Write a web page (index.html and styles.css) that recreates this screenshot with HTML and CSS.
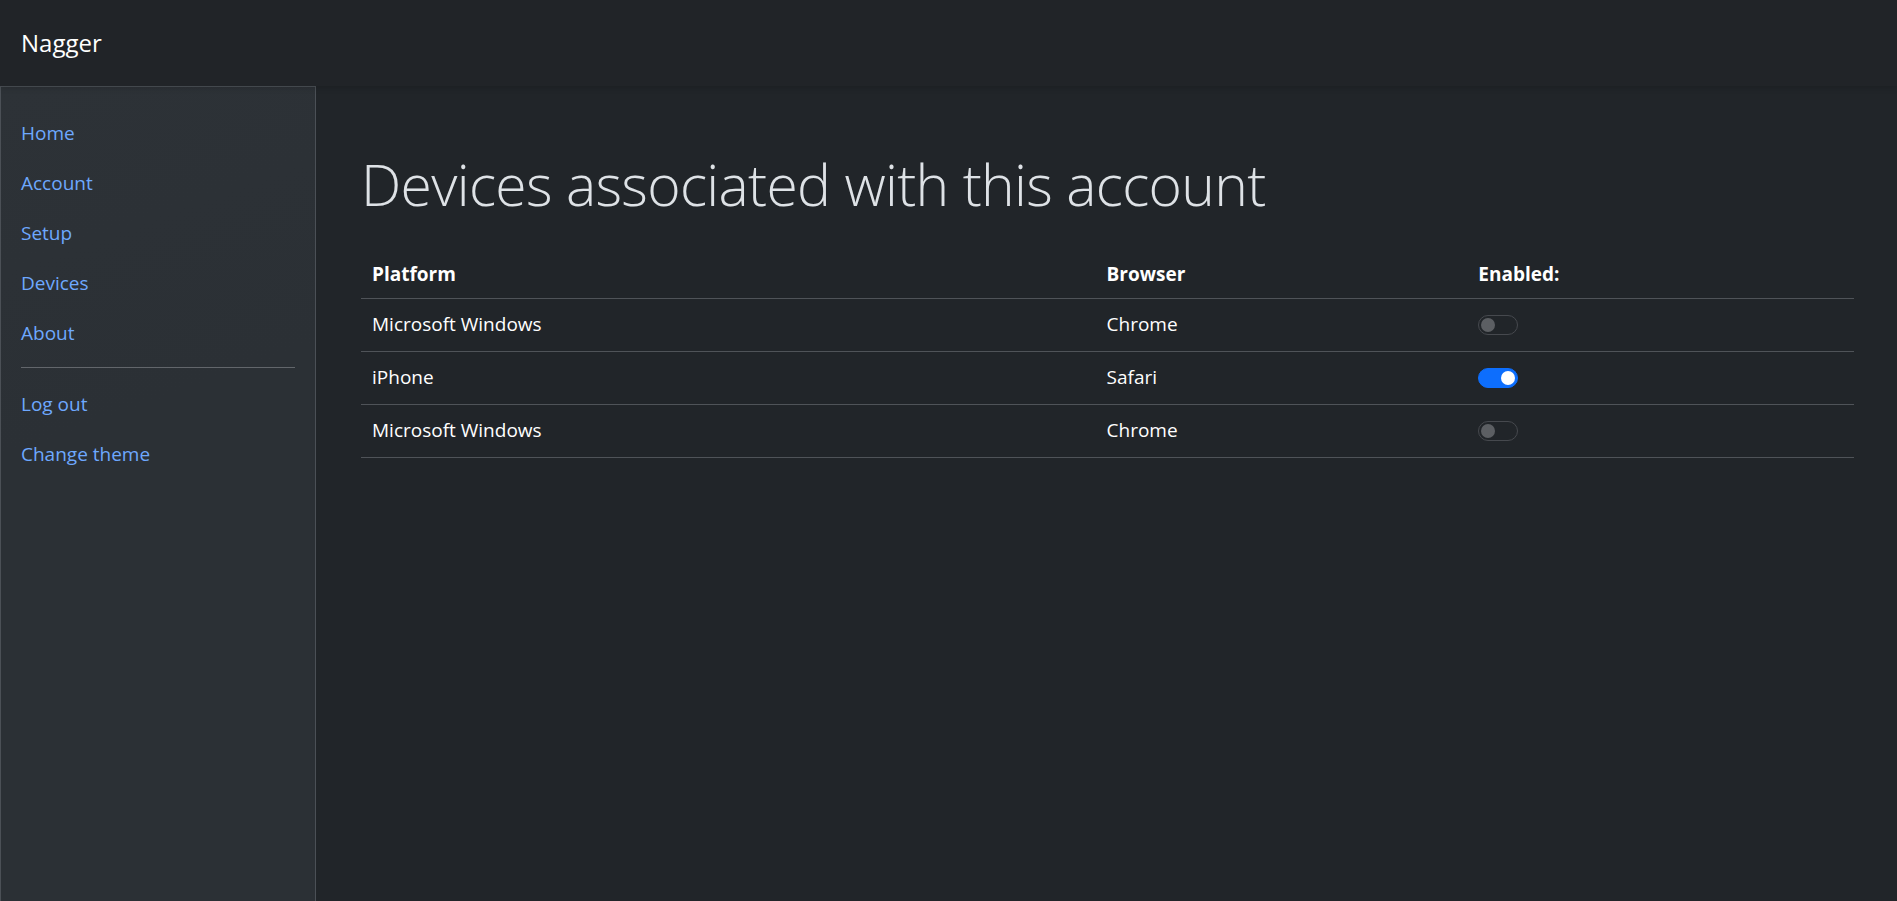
FILE: index.html
```html
<!DOCTYPE html>
<html lang="en">
<head>
<meta charset="utf-8">
<title>Nagger - Devices</title>
<link rel="stylesheet" href="styles.css">
</head>
<body>
<header class="topbar">
  <a class="brand" href="#">Nagger</a>
</header>
<div class="layout">
  <nav class="sidebar">
    <ul class="nav-list">
      <li><a href="#">Home</a></li>
      <li><a href="#">Account</a></li>
      <li><a href="#">Setup</a></li>
      <li><a href="#">Devices</a></li>
      <li><a href="#">About</a></li>
    </ul>
    <hr class="divider">
    <ul class="nav-list">
      <li><a href="#">Log out</a></li>
      <li><a href="#">Change theme</a></li>
    </ul>
  </nav>
  <main class="content">
    <h1 class="title">Devices associated with this account</h1>
    <table class="devices">
      <thead>
        <tr>
          <th class="col-platform">Platform</th>
          <th class="col-browser">Browser</th>
          <th class="col-enabled">Enabled:</th>
        </tr>
      </thead>
      <tbody>
        <tr>
          <td>Microsoft Windows</td>
          <td>Chrome</td>
          <td><span class="switch"></span></td>
        </tr>
        <tr>
          <td>iPhone</td>
          <td>Safari</td>
          <td><span class="switch on"></span></td>
        </tr>
        <tr>
          <td>Microsoft Windows</td>
          <td>Chrome</td>
          <td><span class="switch"></span></td>
        </tr>
      </tbody>
    </table>
  </main>
</div>
</body>
</html>
```
FILE: styles.css
```css
* { box-sizing: border-box; }
html, body { height: 100%; }
body {
  margin: 0;
  background: #212529;
  color: #dee2e6;
  font-family: "Open Sans", "Noto Sans", sans-serif;
  font-size: 19px;
  line-height: 1.5;
  display: flex;
  flex-direction: column;
  overflow: hidden;
}
a { text-decoration: none; }
.topbar {
  height: 86px;
  flex: 0 0 86px;
  background: #212428;
  display: flex;
  align-items: center;
  padding-left: 21px;
  box-shadow: 0 2px 6px rgba(0,0,0,0.15);
  position: relative;
  z-index: 1;
}
.brand {
  color: #ffffff;
  font-size: 24px;
  line-height: 30px;
}
.layout {
  flex: 1;
  display: flex;
  min-height: 0;
}
.sidebar {
  width: 316px;
  flex: 0 0 316px;
  background: linear-gradient(160deg, #2d3237 0%, #2b3035 40%, #2b3035 100%);
  border: 1px solid #4b5056;
  border-bottom: none;
  padding: 21px 20px 0 20px;
}
.nav-list {
  list-style: none;
  margin: 0;
  padding: 0;
}
.nav-list li a {
  display: block;
  color: #6ea8fe;
  line-height: 30px;
  padding: 10px 0;
}
.divider {
  border: none;
  border-top: 1px solid #62666b;
  margin: 9px 0 11px 0;
}
.content {
  flex: 1;
  padding: 62px 43px 0 45px;
}
.title {
  margin: 0 0 30px 0;
  font-weight: 300;
  font-size: 57px;
  line-height: 72px;
  letter-spacing: -0.68px;
  color: #dee2e6;
}
.devices {
  width: 100%;
  border-collapse: collapse;
  color: #ffffff;
}
.devices th {
  text-align: left;
  font-weight: 700;
  height: 48px;
  padding: 0 11px;
  border-bottom: 1px solid #4f5358;
  vertical-align: middle;
}
.devices td {
  height: 53px;
  padding: 0 11px;
  border-bottom: 1px solid #4f5358;
  vertical-align: middle;
}
.col-platform { width: 49.2%; }
.col-browser { width: 24.9%; }
.col-enabled { width: 25.9%; }
.switch {
  display: block;
  width: 40px;
  height: 20px;
  border-radius: 10px;
  border: 1px solid #46494e;
  background: #212529;
  position: relative;
}
.switch::after {
  content: "";
  position: absolute;
  left: 2px;
  top: 2px;
  width: 14px;
  height: 14px;
  border-radius: 50%;
  background: #5c5f63;
}
.switch.on {
  background: #0d6efd;
  border-color: #0d6efd;
}
.switch.on::after {
  left: auto;
  right: 2px;
  background: #ffffff;
}
```
